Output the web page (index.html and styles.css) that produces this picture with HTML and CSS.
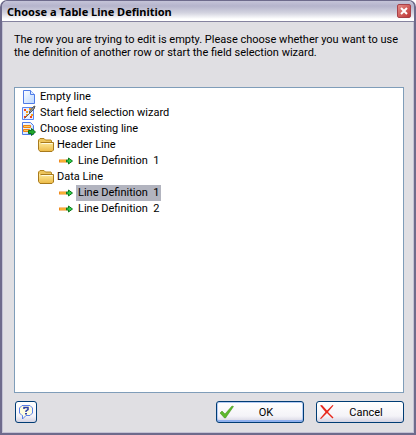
FILE: index.html
```html
<!DOCTYPE html>
<html lang="en">
  <head>
    <meta charset="UTF-8" />
    <meta name="viewport" content="width=device-width, initial-scale=1.0" />
    <title>Choose a Table Line Definition</title>
    <link rel="stylesheet" href="styles.css">
  </head>
  <body>
    <!-- shared icons -->
    <svg class="defs" width="0" height="0" aria-hidden="true">
      <defs>
        <linearGradient id="pageFill" x1="0" y1="0" x2="1" y2="1">
          <stop offset="0" stop-color="#ffffff" />
          <stop offset="1" stop-color="#b9d6ff" />
        </linearGradient>
        <linearGradient id="folderFill" x1="0" y1="0" x2="0" y2="1">
          <stop offset="0" stop-color="#fff0a8" />
          <stop offset="1" stop-color="#ecb944" />
        </linearGradient>
      </defs>
      <symbol id="folder" viewBox="0 0 16 16">
        <path d="M.5 12V3L2 1.500h4L7.500 3H13l.5 1v2" fill="#ecc45c" stroke="#b5851f" />
        <path d="M2.500 5.500h13v7.500l-1.500 1.500H2L.5 12.500V4" fill="url(#folderFill)" stroke="#a87a1c" />
        <path d="M3.500 6.500h11" stroke="#fffbe0" />
      </symbol>
      <symbol id="arrow" viewBox="0 0 14 8">
        <path d="M0 2.500h8v3H0z" fill="#f08a1c" />
        <path d="M1 4h6" stroke="#ffd54a" />
        <path d="M7.500 3h2V1l4 3-4 3V5h-2z" fill="#2fd04a" stroke="#0f7a1c" />
      </symbol>
    </svg>

    <div class="window">
      <header class="titlebar">
        <h1>Choose a Table Line Definition</h1>
        <button class="close" type="button" aria-label="Close">
          <svg width="8" height="8" viewBox="0 0 8 8">
            <path d="M1 1l6 6M7 1l-6 6" stroke="#fff" stroke-width="2" />
          </svg>
        </button>
      </header>

      <main class="content">
        <p class="message">
          The row you are trying to edit is empty. Please choose whether you want to use
          the definition of another row or start the field selection wizard.
        </p>

        <ul class="tree" role="tree">
          <li role="treeitem">
            <div class="row">
              <svg class="icon" viewBox="0 0 16 16">
                <path d="M2.500 1.500h7l4 4v9h-11z" fill="url(#pageFill)" stroke="#4f7be8" />
                <path d="M9.500 1.500v4h4" fill="#dcebff" stroke="#4f7be8" />
              </svg>
              <span>Empty line</span>
            </div>
          </li>
          <li role="treeitem">
            <div class="row">
              <svg class="icon" viewBox="0 0 16 16">
                <path d="M1.500 2.500h11v12h-11z" fill="#e6efff" stroke="#5a84f0" />
                <path d="M3 4h2v2H3zM3 11h2v2H3zM9 11h2v2H9z" fill="#f0431c" />
                <path d="M5 6h2v2H5zM5 9h2v2H5zM8 3h2v2H8zM10 9h2v2h-2z" fill="#f7a01c" />
                <path d="M3.500 13.500L9 8" stroke="#666" />
                <path d="M8 7l4-5 2-1-1 3-4 4z" fill="#999" stroke="#555" />
              </svg>
              <span>Start field selection wizard</span>
            </div>
          </li>
          <li role="treeitem">
            <div class="row">
              <svg class="icon" viewBox="0 0 16 16">
                <path d="M1.500 1.500h8l3 3v9h-11z" fill="url(#pageFill)" stroke="#4f7be8" />
                <path d="M2.500 4.500h7v2h-7zM2.500 8.500h6v2h-6z" fill="#ffc95a" stroke="#ee8414" />
                <path d="M7.500 9.500h3v-2l4 3.500-4 3.500v-2h-3z" fill="#1fa82c" stroke="#0c6e18" />
              </svg>
              <span>Choose existing line</span>
            </div>
            <ul role="group">
              <li role="treeitem">
                <div class="row">
                  <svg class="icon"><use href="#folder" /></svg>
                  <span>Header Line</span>
                </div>
                <ul role="group">
                  <li role="treeitem">
                    <div class="row">
                      <svg class="arrow"><use href="#arrow" /></svg>
                      <span>Line Definition&nbsp; 1</span>
                    </div>
                  </li>
                </ul>
              </li>
              <li role="treeitem">
                <div class="row">
                  <svg class="icon"><use href="#folder" /></svg>
                  <span>Data Line</span>
                </div>
                <ul role="group">
                  <li role="treeitem" aria-selected="true">
                    <div class="row selected">
                      <svg class="arrow"><use href="#arrow" /></svg>
                      <span>Line Definition&nbsp; 1</span>
                    </div>
                  </li>
                  <li role="treeitem">
                    <div class="row">
                      <svg class="arrow"><use href="#arrow" /></svg>
                      <span>Line Definition&nbsp; 2</span>
                    </div>
                  </li>
                </ul>
              </li>
            </ul>
          </li>
        </ul>

        <footer class="buttons">
          <button class="btn help" type="button" aria-label="Help">
            <svg width="16" height="16" viewBox="0 0 16 16">
              <path d="M4 1.500h8l2.500 2.500v5L12 11.500H8L4.500 15v-3.500H4L1.500 9V4z" fill="#fffde0" stroke="#5a80e8" />
              <path d="M6 5V3.500h4V5.500L8 7v1" fill="none" stroke="#2c3fa8" stroke-width="1.500" />
              <path d="M7 9h2v1.500H7z" fill="#2c3fa8" />
            </svg>
          </button>
          <button class="btn primary" type="button">
            <svg width="16" height="16" viewBox="0 0 16 16">
              <path d="M1 9l2-2 3 3L13 2l1.500.500L6.500 14H5.500z" fill="#5cb82c" stroke="#3c8c14" stroke-width=".5" />
            </svg>
            <span>OK</span>
          </button>
          <button class="btn" type="button">
            <svg width="16" height="16" viewBox="0 0 16 16">
              <path d="M1 1.500l2-.5 5 5.500L13.500 1l1 .5L9 8l5.500 5.500-1 1L8 9l-6 6-1-.5L6.500 8z" fill="#e8281c" />
            </svg>
            <span>Cancel</span>
          </button>
        </footer>
      </main>
    </div>
  </body>
</html>
```

FILE: styles.css
```css
* {
  box-sizing: border-box;
}
body {
  margin: 0;
  background: #fff;
  color: #000;
  font-family: Roboto, Tahoma, sans-serif;
  font-size: 11px;
  line-height: 13px;
}
.defs {
  position: absolute;
}
.window {
  display: flex;
  flex-direction: column;
  min-height: 100vh;
  background: #e0dfe3;
  border: 2px solid #6e6b8c;
  border-top-width: 1px;
  border-radius: 7px 7px 0 0;
  box-shadow: inset 1px 0 #c3c2d4, inset -1px -1px #c3c2d4;
}
.titlebar {
  display: flex;
  align-items: center;
  justify-content: space-between;
  height: 21px;
  padding: 0 3px 0 5px;
  background: linear-gradient(#c5c4d8, #b5b4cc 25%, #d4d4e0 60%, #fff 90%);
  border-bottom: 1px solid #85839f;
  border-radius: 6px 6px 0 0;
}
h1 {
  margin: 0;
  font-family: "Noto Sans", Tahoma, sans-serif;
  font-size: 11px;
  font-weight: bold;
}
.close {
  display: flex;
  align-items: center;
  justify-content: center;
  width: 14px;
  height: 14px;
  padding: 0;
  background: linear-gradient(135deg, #e28a86, #c03534);
  border: 1px solid #a84048;
  border-radius: 2px;
}
.content {
  display: flex;
  flex: 1;
  flex-direction: column;
  padding: 11px 10px 10px 12px;
}
.message {
  min-height: 54px;
  margin: 0;
}
ul {
  margin: 0;
  padding: 0;
  list-style: none;
}
.tree {
  flex: 1;
  padding: 1px 6px;
  background: #fff;
  border: 1px solid #7f9db9;
}
.tree ul {
  padding-left: 17px;
}
.tree ul ul {
  padding-left: 21px;
}
.row {
  display: flex;
  align-items: center;
  height: 16px;
}
.row span {
  padding: 0 2px;
  line-height: 16px;
}
.icon {
  width: 16px;
  height: 16px;
  margin-right: 1px;
}
.arrow {
  width: 14px;
  height: 8px;
  margin-right: 3px;
}
.selected span {
  background: #b2b4bf;
}
.buttons {
  display: flex;
  gap: 12px;
  padding: 8px 0 0 1px;
}
.btn {
  display: flex;
  align-items: center;
  width: 88px;
  height: 22px;
  padding: 0 2px;
  color: #000;
  font: inherit;
  background: linear-gradient(#fff, #f4f3f8 70%, #d4d3e2);
  border: 1px solid #003c74;
  border-radius: 3px;
}
.btn span {
  flex: 1;
  padding-right: 4px;
  text-align: center;
}
.help {
  width: 22px;
  margin-right: auto;
}
.primary {
  box-shadow: inset 0 -2px #8fb0ee, inset 0 0 0 1px #b4cbf4;
}
```
